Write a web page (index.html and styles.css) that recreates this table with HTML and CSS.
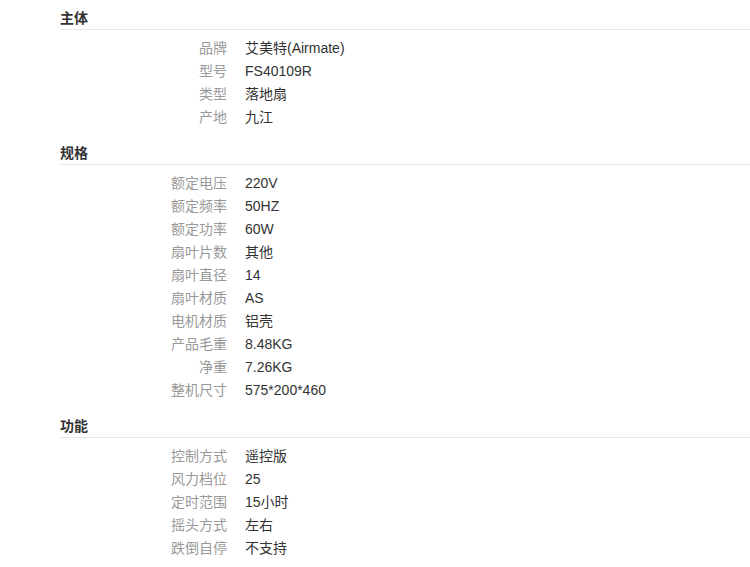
FILE: index.html
```html
<!DOCTYPE html>
<html lang="zh-CN">
<head>
<meta charset="utf-8">
<title>规格参数</title>
<link rel="stylesheet" href="styles.css">
</head>
<body>
<div class="specs">
  <section class="group">
    <h3 class="group-title">主体</h3>
    <dl class="rows">
      <dt>品牌</dt><dd>艾美特(Airmate)</dd>
      <dt>型号</dt><dd>FS40109R</dd>
      <dt>类型</dt><dd>落地扇</dd>
      <dt>产地</dt><dd>九江</dd>
    </dl>
  </section>
  <section class="group">
    <h3 class="group-title">规格</h3>
    <dl class="rows">
      <dt>额定电压</dt><dd>220V</dd>
      <dt>额定频率</dt><dd>50HZ</dd>
      <dt>额定功率</dt><dd>60W</dd>
      <dt>扇叶片数</dt><dd>其他</dd>
      <dt>扇叶直径</dt><dd>14</dd>
      <dt>扇叶材质</dt><dd>AS</dd>
      <dt>电机材质</dt><dd>铝壳</dd>
      <dt>产品毛重</dt><dd>8.48KG</dd>
      <dt>净重</dt><dd>7.26KG</dd>
      <dt>整机尺寸</dt><dd>575*200*460</dd>
    </dl>
  </section>
  <section class="group">
    <h3 class="group-title">功能</h3>
    <dl class="rows">
      <dt>控制方式</dt><dd>遥控版</dd>
      <dt>风力档位</dt><dd>25</dd>
      <dt>定时范围</dt><dd>15小时</dd>
      <dt>摇头方式</dt><dd>左右</dd>
      <dt>跌倒自停</dt><dd>不支持</dd>
    </dl>
  </section>
</div>
</body>
</html>
```
FILE: styles.css
```css
html, body {
  margin: 0;
  padding: 0;
  background: #fff;
}
body {
  font-family: "Liberation Sans", "Noto Sans CJK SC", sans-serif;
  font-size: 14px;
  color: #333;
}
.specs {
  padding: 7px 0 0 60px;
}
.group {
  margin-bottom: 13px;
}
.group-title {
  margin: 0;
  font-size: 14px;
  font-weight: bold;
  color: #333;
  line-height: 22px;
  border-bottom: 1px solid #e8e8e8;
}
.rows {
  display: grid;
  grid-template-columns: 167px 1fr;
  column-gap: 18px;
  margin: 7px 0 0 0;
}
.rows dt {
  text-align: right;
  color: #999;
  line-height: 23px;
}
.rows dd {
  margin: 0;
  color: #333;
  line-height: 23px;
}
```
